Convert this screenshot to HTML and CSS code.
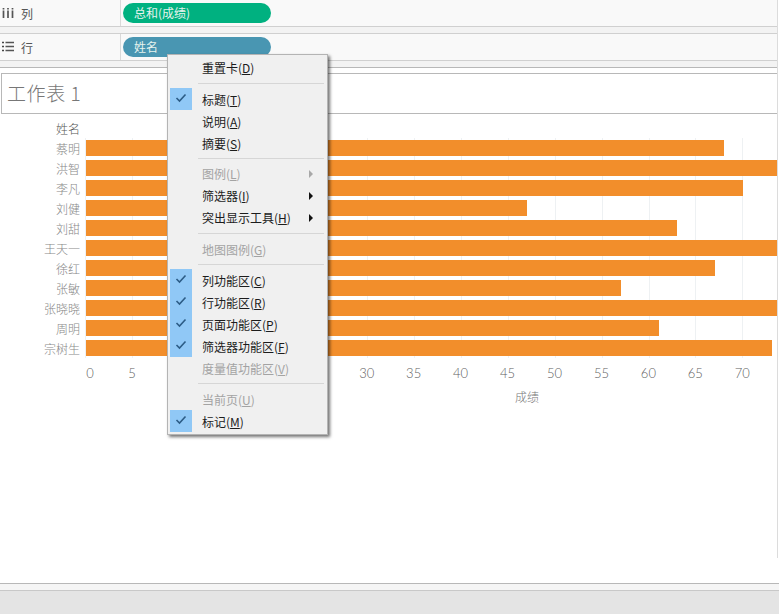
FILE: index.html
```html
<!DOCTYPE html>
<html lang="zh">
<head>
<meta charset="utf-8">
<title>工作表 1</title>
<link rel="stylesheet" href="styles.css">
</head>
<body>
<div class="app">
  <main class="sheet">
    <section class="shelf">
      <div class="shelf-label">
        <svg class="shelf-icon" width="12" height="12" viewBox="0 0 12 12"><path d="M1.500 1v1.500M6 1v1.500M10.500 1v1.500" stroke="#555" stroke-width="1.700"/><path d="M1.500 3.500V11M6 3.500V11M10.500 3.500V11" stroke="#555" stroke-width="1.700"/></svg>
        <span>列</span>
      </div>
      <div class="shelf-body"><span class="pill pill-green">总和(成绩)</span></div>
    </section>
    <div class="shelf-gap"></div>
    <section class="shelf">
      <div class="shelf-label">
        <svg class="shelf-icon" width="12" height="12" viewBox="0 0 12 12"><path d="M0 1.500h2M0 5.500h2M0 9.500h2" stroke="#444" stroke-width="1.700"/><path d="M3.500 1.500H12M3.500 5.500H12M3.500 9.500H12" stroke="#555" stroke-width="1.700"/></svg>
        <span>行</span>
      </div>
      <div class="shelf-body"><span class="pill pill-blue">姓名</span></div>
    </section>
    <div class="shelf-gap shelf-gap-last"></div>
    <div class="title-pad"></div>
    <h1 class="title">工作表 1</h1>
    <section class="chart">
      <div class="header-row"><span class="name name-head">姓名</span></div>
      <div class="plot">
        <div class="row"><span class="name">蔡明</span><div class="bar" style="width:638px"></div></div>
        <div class="row"><span class="name">洪智</span><div class="bar" style="width:700px"></div></div>
        <div class="row"><span class="name">李凡</span><div class="bar" style="width:657px"></div></div>
        <div class="row"><span class="name">刘健</span><div class="bar" style="width:441px"></div></div>
        <div class="row"><span class="name">刘甜</span><div class="bar" style="width:591px"></div></div>
        <div class="row"><span class="name">王天一</span><div class="bar" style="width:700px"></div></div>
        <div class="row"><span class="name">徐红</span><div class="bar" style="width:629px"></div></div>
        <div class="row"><span class="name">张敏</span><div class="bar" style="width:535px"></div></div>
        <div class="row"><span class="name">张晓晓</span><div class="bar" style="width:700px"></div></div>
        <div class="row"><span class="name">周明</span><div class="bar" style="width:573px"></div></div>
        <div class="row"><span class="name">宗树生</span><div class="bar" style="width:686px"></div></div>
      </div>
      <div class="ticks">
        <span class="tick tick-zero">0</span><span class="tick">5</span><span class="tick">10</span><span class="tick">15</span><span class="tick">20</span><span class="tick">25</span><span class="tick">30</span><span class="tick">35</span><span class="tick">40</span><span class="tick">45</span><span class="tick">50</span><span class="tick">55</span><span class="tick">60</span><span class="tick">65</span><span class="tick">70</span>
      </div>
      <div class="axis-title">成绩</div>
    </section>
  </main>
  <footer class="footer">
    <div class="footer-strip"></div>
    <div class="footer-bar"></div>
  </footer>
</div>

<nav class="menu">
  <div class="item"><span class="check"></span><span>重置卡(<u>D</u>)</span></div>
  <div class="sep sep-a"></div>
  <div class="item"><span class="check on"><svg width="12" height="10" viewBox="0 0 12 10"><path d="M1.500 5l3 3 6-6.500" fill="none" stroke="#2c5c86" stroke-width="1.600"/></svg></span><span>标题(<u>T</u>)</span></div>
  <div class="item"><span class="check"></span><span>说明(<u>A</u>)</span></div>
  <div class="item"><span class="check"></span><span>摘要(<u>S</u>)</span></div>
  <div class="sep sep-b"></div>
  <div class="item off"><span class="check"></span><span>图例(<u>L</u>)</span><svg class="arrow" width="4" height="8" viewBox="0 0 4 8"><path d="M0 0l4 4-4 4z" fill="#a8a8a8"/></svg></div>
  <div class="item"><span class="check"></span><span>筛选器(<u>I</u>)</span><svg class="arrow" width="4" height="8" viewBox="0 0 4 8"><path d="M0 0l4 4-4 4z" fill="#111"/></svg></div>
  <div class="item"><span class="check"></span><span>突出显示工具(<u>H</u>)</span><svg class="arrow" width="4" height="8" viewBox="0 0 4 8"><path d="M0 0l4 4-4 4z" fill="#111"/></svg></div>
  <div class="sep sep-c"></div>
  <div class="item off"><span class="check"></span><span>地图图例(<u>G</u>)</span></div>
  <div class="sep sep-d"></div>
  <div class="item"><span class="check on"><svg width="12" height="10" viewBox="0 0 12 10"><path d="M1.500 5l3 3 6-6.500" fill="none" stroke="#2c5c86" stroke-width="1.600"/></svg></span><span>列功能区(<u>C</u>)</span></div>
  <div class="item"><span class="check on"><svg width="12" height="10" viewBox="0 0 12 10"><path d="M1.500 5l3 3 6-6.500" fill="none" stroke="#2c5c86" stroke-width="1.600"/></svg></span><span>行功能区(<u>R</u>)</span></div>
  <div class="item"><span class="check on"><svg width="12" height="10" viewBox="0 0 12 10"><path d="M1.500 5l3 3 6-6.500" fill="none" stroke="#2c5c86" stroke-width="1.600"/></svg></span><span>页面功能区(<u>P</u>)</span></div>
  <div class="item"><span class="check on"><svg width="12" height="10" viewBox="0 0 12 10"><path d="M1.500 5l3 3 6-6.500" fill="none" stroke="#2c5c86" stroke-width="1.600"/></svg></span><span>筛选器功能区(<u>F</u>)</span></div>
  <div class="item off"><span class="check"></span><span>度量值功能区(<u>V</u>)</span></div>
  <div class="sep sep-d"></div>
  <div class="item off"><span class="check"></span><span>当前页(<u>U</u>)</span></div>
  <div class="item"><span class="check on"><svg width="12" height="10" viewBox="0 0 12 10"><path d="M1.500 5l3 3 6-6.500" fill="none" stroke="#2c5c86" stroke-width="1.600"/></svg></span><span>标记(<u>M</u>)</span></div>
</nav>
</body>
</html>
```

FILE: styles.css
```css
* { box-sizing: border-box; }
html, body { margin: 0; padding: 0; }
body {
  width: 779px;
  height: 614px;
  overflow: hidden;
  background: #fff;
  font-family: "Noto Sans CJK SC", "Liberation Sans", sans-serif;
  position: relative;
}
.app {
  display: flex;
  flex-direction: column;
  justify-content: space-between;
  height: 614px;
}
.sheet {
  flex: none;
  height: 558px;
  width: 778px;
  border-right: 1px solid #dcdcdc;
  overflow: hidden;
}
.shelf {
  display: flex;
  height: 27px;
  background: #f9f9f9;
  border-bottom: 1px solid #d0d0d0;
}
.shelf-label {
  width: 121px;
  display: flex;
  align-items: center;
  gap: 7px;
  padding-left: 2px;
  border-right: 1px solid #d9d9d9;
  font-size: 12px;
  color: #555;
}
.shelf-icon { flex: none; }
.shelf-body { flex: 1; padding: 3px 2px; }
.pill {
  display: block;
  width: 148px;
  height: 20px;
  border-radius: 10px;
  padding-left: 11px;
  color: #e6f3ee;
  font-size: 12px;
  line-height: 19px;
}
.pill-green { background: #00b180; }
.pill-blue { background: #4996b2; }
.shelf-gap {
  height: 7px;
  background: #f3f3f3;
  border-bottom: 1px solid #d0d0d0;
}
.shelf-gap-last { border-bottom-color: #b8b8b8; }
.title-pad { height: 5px; }
.title {
  margin: 0 0 0 1px;
  height: 41px;
  border: 1px solid #b8b8b8;
  border-right: 0;
  padding-left: 5px;
  font-size: 19px;
  font-weight: 300;
  line-height: 37px;
  letter-spacing: .6px;
  color: #777;
}
.chart { padding-top: 4px; }
.header-row { height: 20px; display: flex; align-items: center; }
.name {
  flex: none;
  width: 80px;
  margin-right: 6px;
  text-align: right;
  font-size: 12px;
  font-weight: 300;
  color: #888;
  white-space: nowrap;
}
.name-head { color: #555; }
.plot {
  background-image: repeating-linear-gradient(90deg, #eef1f3 0, #eef1f3 1px, transparent 1px, transparent 46.96px);
  background-position: 85px 0;
  background-repeat: no-repeat;
}
.row { height: 20px; display: flex; align-items: center; }
.bar { height: 16px; flex: none; background: #f28e2b; }
.ticks {
  display: flex;
  margin-left: 61.500px;
  height: 30px;
  padding-top: 5px;
}
.tick {
  flex: none;
  width: 46.960px;
  text-align: center;
  font-family: Lato, "Liberation Sans", sans-serif;
  font-size: 13px;
  font-weight: 300;
  line-height: 20px;
  color: #5f5f5f;
}
.tick-zero { padding-left: 10px; }
.axis-title {
  margin-left: 515px;
  font-size: 12px;
  font-weight: 300;
  line-height: 18px;
  color: #777;
}
.footer { flex: none; }
.footer-strip {
  height: 7px;
  background: #f5f5f5;
  border-top: 1px solid #b8b8b8;
}
.footer-bar {
  height: 24px;
  background: #e4e4e4;
  border-top: 1px solid #c8c8c8;
}
.menu {
  position: absolute;
  left: 167px;
  top: 54px;
  width: 161px;
  height: 381px;
  padding: 2px 1px 2px 2px;
  background: #f0f0f0;
  border: 1px solid #b4b4b4;
  box-shadow: 2px 2px 3px rgba(0, 0, 0, .55);
  font-size: 12px;
  color: #1c1c1c;
}
.item {
  position: relative;
  display: flex;
  align-items: center;
  height: 22px;
  line-height: 22px;
  padding-top: 2px;
}
.item:first-child { padding-top: 0; }
.item.off { color: #a3a3a3; }
.check {
  flex: none;
  width: 22px;
  height: 22px;
  margin: -2px 10px 0 0;
  display: flex;
  align-items: center;
  justify-content: center;
}
.item:first-child .check { margin-top: 0; }
.check svg { margin-top: -3px; }
.check.on { background: #90c8f6; }
.arrow { position: absolute; left: 139px; top: 8px; }
.sep {
  height: 1px;
  margin: 4px 2px 4px 28px;
  background: #d6d6d6;
}
.sep-a { margin-top: 4px; margin-bottom: 4px; }
.sep-b { margin-top: 4px; margin-bottom: 3px; }
.sep-c { margin-top: 5px; margin-bottom: 4px; }
.sep-d { margin-top: 4px; margin-bottom: 4px; }
```
